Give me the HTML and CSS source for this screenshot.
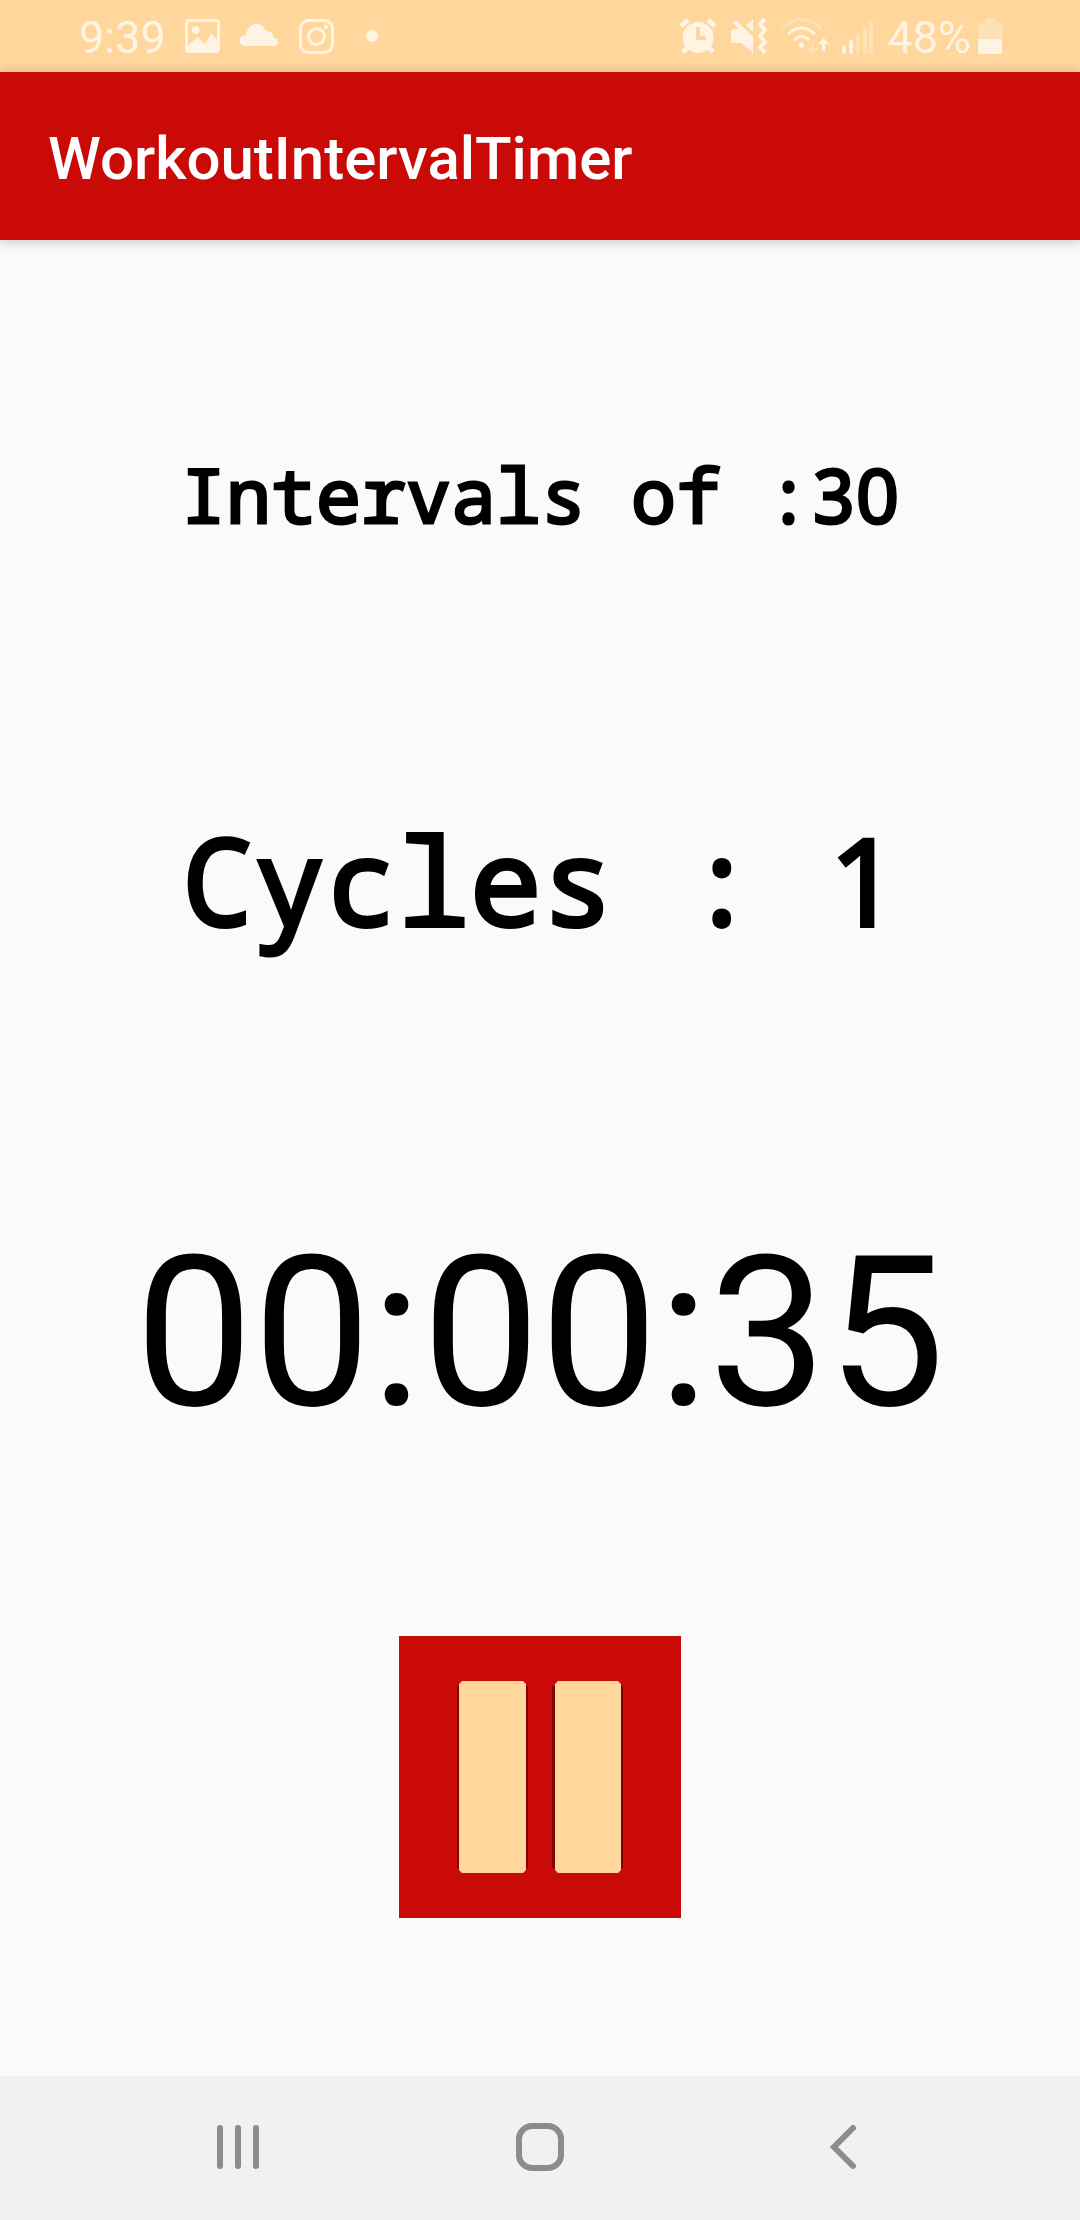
FILE: index.html
```html
<!DOCTYPE html>
<html lang="en">
<head>
<meta charset="utf-8">
<meta name="viewport" content="width=device-width, initial-scale=1">
<title>WorkoutIntervalTimer</title>
<link rel="stylesheet" href="styles.css">
</head>
<body>
<div class="status">
  <div class="status-left">
    <time class="status-text">9:39</time>
    <svg width="36" height="36" viewBox="0 0 36 36"><path fill-rule="evenodd" d="M4 1h27q4 0 4 4v26q0 4-4 4H4q-4 0-4-4V5q0-4 4-4zM3 4v23l10-8 7 7 6-11 6 6V4z" /><circle cx="10.500" cy="12" r="4"/></svg>
    <svg width="40" height="36" viewBox="0 0 40 36"><path d="M5 28a5.500 5.500 0 0 1 0-11h1C7 10 11 6 17 6q6 0 9 7 7-1 8 7a4 4 0 0 1 0 8z"/></svg>
    <svg width="36" height="36" viewBox="0 0 36 36"><g fill="none" stroke="currentColor" stroke-width="3"><rect x="1.500" y="2.500" width="32" height="32" rx="8"/><circle cx="17.500" cy="18.500" r="8"/></g><circle cx="27" cy="9" r="2.200"/></svg>
    <svg width="36" height="36" viewBox="0 0 36 36"><circle cx="18" cy="18" r="6"/></svg>
  </div>
  <div class="status-right">
    <svg width="38" height="36" viewBox="0 0 38 36"><path fill-rule="evenodd" d="M19 4a15.500 15.500 0 1 0 .1 0zM17 9h4v9h6v4H17z"/><path d="M2 8l7-6M36 8l-7-6M9 29l-5 5M29 29l5 5" fill="none" stroke="currentColor" stroke-width="5"/></svg>
    <svg width="38" height="36" viewBox="0 0 38 36"><path d="M3 11h6l-6-6 3-3 17 17v16L11 25H3q-2 0-2-2V13q0-2 2-2zM23 1v13l-7-7z"/><path d="M35 1l-5 5 5 6-5 6 5 6-5 5 5 6" fill="none" stroke="currentColor" stroke-width="4"/></svg>
    <svg width="48" height="36" viewBox="0 0 48 36"><g fill="none" stroke="currentColor" stroke-width="3"><path class="dim" d="M1 10Q20-7 40 10"/><path d="M7 16q13-12 27 0M13 22q7-7 15 0"/></g><circle cx="20.500" cy="27" r="2.700"/><path class="dim" d="M30 24h3v6h4l-5 6-6-6h4z"/><path d="M43 20l5 6h-4v7h-3v-7h-4z"/></svg>
    <svg width="32" height="36" viewBox="0 0 32 36"><path d="M2 29v5M9 24v10" fill="none" stroke="currentColor" stroke-width="4" stroke-linecap="round"/><path class="dim" d="M16 17v17M23 10v24M29 4v30" fill="none" stroke="currentColor" stroke-width="4" stroke-linecap="round"/></svg>
    <div class="battery">
      <span class="status-text">48%</span>
      <svg width="24" height="36" viewBox="0 0 24 36"><path class="dim" d="M0 21V7q0-2 2-2h5V2q0-2 2-2h7q2 0 2 2v3h4q2 0 2 2v14z"/><path d="M0 21h24v13q0 2-2 2H2q-2 0-2-2z"/></svg>
    </div>
  </div>
</div>
<header class="appbar"><h1>WorkoutIntervalTimer</h1></header>
<main class="content">
  <p class="intervals">Intervals of :3<span class="plain">0</span></p>
  <p class="cycles">Cycles : <span class="plain">1</span></p>
  <p class="timer">00:00:35</p>
  <button class="pause" type="button" aria-label="Pause">
    <svg width="282" height="282" viewBox="0 0 282 282"><path class="shade" d="M58 50h71v182H58zM153 50h71v182h-71z"/><path class="bar" d="M63 45h61l3 3v186l-3 3H63l-3-3V48zM159 45h60l3 3v186l-3 3h-60l-3-3V48z"/></svg>
  </button>
</main>
<nav class="navbar">
  <button type="button" aria-label="Recent apps"><svg width="48" height="48" viewBox="0 0 48 48"><path d="M6 5v38M24 5v38M42 5v38"/></svg></button>
  <button type="button" aria-label="Home"><svg width="48" height="48" viewBox="0 0 48 48"><rect x="3" y="3" width="42" height="42" rx="13"/></svg></button>
  <button type="button" aria-label="Back"><svg width="48" height="48" viewBox="0 0 48 48"><path d="M35 5L16 24l19 19"/></svg></button>
</nav>
</body>
</html>
```
FILE: styles.css
```css
* { box-sizing: border-box; }
body {
  margin: 0;
  min-height: 100vh;
  display: flex;
  flex-direction: column;
  background: #fafafa;
  color: #000;
  font-family: Roboto, sans-serif;
}
h1, p { margin: 0; }
svg { display: block; flex: none; }
button { border: 0; padding: 0; background: none; }

.status {
  height: 72px;
  padding: 0 78px 0 79px;
  display: flex;
  justify-content: space-between;
  background: #ffd69b;
  color: #fff3e3;
  font-size: 45px;
  line-height: 68px;
}
.status-text { padding-top: 3px; }
.status svg { fill: currentColor; }
.status .dim { opacity: 0.4; }
.status-left { display: flex; align-items: center; gap: 19px; }
.status-right { display: flex; align-items: center; gap: 13px; }
.battery { display: flex; align-items: center; gap: 7px; }

.appbar {
  height: 168px;
  padding: 5px 48px 0;
  display: flex;
  align-items: center;
  background: #c90a07;
  color: #fff;
  box-shadow: 0 2px 12px rgba(0, 0, 0, 0.2);
}
.appbar h1 { font-size: 60px; font-weight: 500; line-height: 72px; }

.content {
  flex: 1;
  display: flex;
  flex-direction: column;
  align-items: center;
  padding: 204px 24px 156px;
}
.intervals, .cycles {
  font-family: "Noto Sans Mono", "DejaVu Sans Mono", monospace;
}
.intervals { font-size: 75px; line-height: 100px; -webkit-text-stroke: 3px #000; }
/* digits without the monospace slash or foot */
.plain { font-family: "Noto Sans", sans-serif; }
.cycles { margin-top: 266px; font-size: 120px; line-height: 140px; -webkit-text-stroke: 4px #000; }
.timer { margin-top: 260px; font-size: 210px; line-height: 246px; }
.pause { margin-top: 180px; background: #c90a07; }
.shade { fill: #7d0300; }
.bar { fill: #ffd69b; }

.navbar {
  height: 144px;
  padding: 0 87px 2px;
  display: grid;
  grid-template-columns: repeat(3, 1fr);
  background: #f1f1f1;
}
.navbar button { display: grid; place-items: center; }
.navbar svg {
  fill: none;
  stroke: #8c8c8c;
  stroke-width: 6;
  stroke-linecap: round;
}
```
